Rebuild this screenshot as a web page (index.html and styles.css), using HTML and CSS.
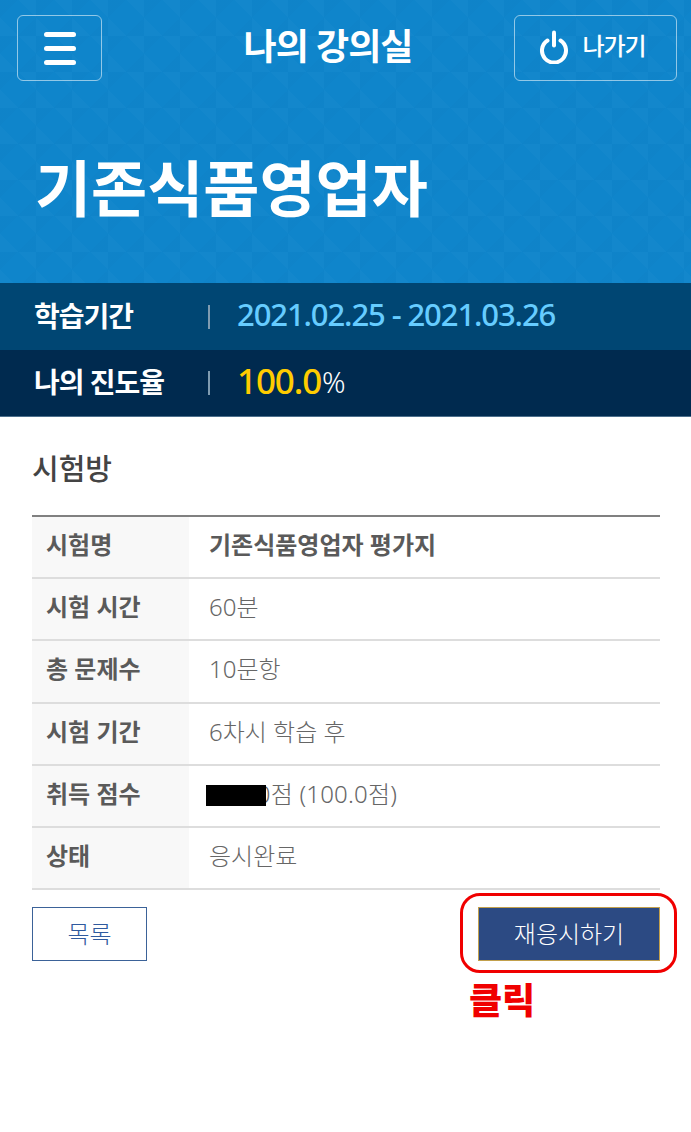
FILE: index.html
```html
<!DOCTYPE html>
<html lang="ko">
<head>
    <meta charset="UTF-8">
    <meta name="viewport" content="width=device-width, initial-scale=1.0">
    <title>나의 강의실</title>
    <link rel="stylesheet" href="styles.css">
</head>
<body>

<header class="hero">
    <div class="topbar">
        <button class="top-btn menu-btn" aria-label="메뉴">
            <span></span><span></span><span></span>
        </button>
        <h1 class="page-title">나의 강의실</h1>
        <button class="top-btn exit-btn">
            <svg class="power-icon" width="30" height="34" viewBox="0 0 30 34" fill="none" stroke="#fff" stroke-width="4" stroke-linecap="round">
                <path d="M8.5 10.5a12 12 0 1 0 13 0"/>
                <path d="M15 2.5v13"/>
            </svg>
            나가기
        </button>
    </div>
    <h2 class="course-title">기존식품영업자</h2>
</header>

<div class="info-row period">
    <span class="info-label">학습기간</span>
    <span class="info-value">2021.02.25 - 2021.03.26</span>
</div>
<div class="info-row progress">
    <span class="info-label">나의 진도율</span>
    <span class="info-value"><b>100.0</b><small>%</small></span>
</div>

<main class="content">
    <h3 class="section-title">시험방</h3>
    <table class="exam-table">
        <tr><th>시험명</th><td class="strong">기존식품영업자 평가지</td></tr>
        <tr><th>시험 시간</th><td>60분</td></tr>
        <tr><th>총 문제수</th><td>10문항</td></tr>
        <tr><th>시험 기간</th><td>6차시 학습 후</td></tr>
        <tr><th>취득 점수</th><td><span class="score"><i class="redact"></i>100.0점 (100.0점)</span></td></tr>
        <tr><th>상태</th><td>응시완료</td></tr>
    </table>
    <div class="actions">
        <a class="btn btn-list">목록</a>
        <div class="retake">
            <a class="btn btn-retake">재응시하기</a>
            <div class="callout"></div>
            <span class="callout-text">클릭</span>
        </div>
    </div>
</main>

</body>
</html>
```

FILE: styles.css
```css
* {
    box-sizing: border-box;
}
body {
    margin: 0;
    background-color: #fff;
    font-family: "Noto Sans", "Noto Sans CJK KR", sans-serif;
    color: #555;
}
.hero {
    height: 283px;
    padding: 15px 14px 0 17px;
    background-color: #0f85cb;
    background-image:
        linear-gradient(45deg, rgba(255, 255, 255, 0.015) 25%, transparent 25%, transparent 75%, rgba(255, 255, 255, 0.015) 75%),
        linear-gradient(-45deg, rgba(0, 60, 130, 0.025) 25%, transparent 25%, transparent 75%, rgba(0, 60, 130, 0.025) 75%);
    background-size: 36px 36px;
}
.topbar {
    display: flex;
    justify-content: space-between;
    align-items: center;
}
.top-btn {
    height: 66px;
    background: transparent;
    border: 1px solid rgba(255, 255, 255, 0.55);
    border-radius: 6px;
    color: #fff;
    font-family: inherit;
}
.menu-btn {
    width: 85px;
    display: flex;
    flex-direction: column;
    justify-content: center;
    align-items: center;
    gap: 9px;
    padding: 0;
}
.menu-btn span {
    display: block;
    width: 32px;
    height: 5px;
    background-color: #fff;
    border-radius: 3px;
}
.page-title {
    margin: 0 0 2px 40px;
    color: #fff;
    font-size: 36px;
    font-weight: 700;
    letter-spacing: -1px;
    line-height: 1.2;
}
.exit-btn {
    width: 163px;
    display: flex;
    align-items: center;
    justify-content: center;
    gap: 13px;
    padding: 0 6px 4px 0;
    font-size: 24px;
    font-weight: 500;
    letter-spacing: -1px;
    line-height: 1;
}
.exit-btn .power-icon {
    margin-bottom: -2px;
}
.course-title {
    margin: 64px 0 0 18px;
    color: #fff;
    font-size: 61px;
    font-weight: 700;
    line-height: 88px;
}
.info-row {
    height: 67px;
    display: flex;
    align-items: center;
    padding-left: 34px;
    color: #fff;
}
.period {
    background-color: #004673;
}
.progress {
    background-color: #002a4f;
    border-bottom: 1px solid #4c6f8c;
}
.info-label {
    width: 174px;
    padding-bottom: 2px;
    font-size: 28px;
    font-weight: 700;
    letter-spacing: -1px;
    line-height: 36px;
}
.info-value {
    border-left: 2px solid #7f9bb0;
    height: 24px;
    padding: 0 0 6px 27px;
    display: flex;
    align-items: center;
    font-size: 31px;
    font-weight: 500;
    letter-spacing: -1.1px;
    color: #66ccff;
}
.info-value b {
    font-size: 35px;
    font-weight: 500;
    color: #ffcc00;
}
.info-value small {
    margin-top: 3px;
    margin-left: 1px;
    font-size: 29px;
    font-weight: 300;
    color: #fff;
}
.content {
    padding: 0 31px 170px 32px;
}
.section-title {
    margin: 0;
    padding-top: 30px;
    height: 98px;
    color: #444;
    font-size: 29px;
    font-weight: 500;
    line-height: 44px;
}
.exam-table {
    width: 100%;
    border-collapse: collapse;
    border-top: 2px solid #808080;
}
.exam-table tr {
    height: 62.2px;
    border-bottom: 2px solid #dddddd;
}
.exam-table th {
    width: 157px;
    padding: 0 0 7px 14px;
    background-color: #f8f8f8;
    color: #5a5a5a;
    font-size: 24px;
    font-weight: 700;
    text-align: left;
}
.exam-table td {
    padding: 0 0 7px 20px;
    color: #666;
    font-size: 24px;
    font-weight: 300;
}
.exam-table td.strong {
    font-weight: 700;
    color: #5a5a5a;
}
.score {
    position: relative;
    letter-spacing: 0.2px;
}
.redact {
    position: absolute;
    left: -3px;
    top: 8px;
    width: 60px;
    height: 21px;
    background-color: #000;
}
.actions {
    display: flex;
    justify-content: space-between;
    margin-top: 17px;
}
.btn {
    display: flex;
    align-items: center;
    justify-content: center;
    height: 54px;
    padding-bottom: 4px;
    font-size: 24px;
    font-weight: 300;
}
.btn-list {
    width: 115px;
    border: 1px solid #3b6298;
    color: #2f5a9e;
}
.retake {
    position: relative;
    width: 182px;
}
.btn-retake {
    background-color: #2c4a83;
    border: 1px solid #c2a04c;
    color: #fff;
}
.callout {
    position: absolute;
    left: -18px;
    top: -14px;
    width: 217px;
    height: 80px;
    border: 3px solid #f00000;
    border-radius: 20px;
}
.callout-text {
    position: absolute;
    left: -9px;
    top: 68px;
    color: #f00000;
    font-size: 36px;
    font-weight: 900;
    line-height: 52px;
}
```
